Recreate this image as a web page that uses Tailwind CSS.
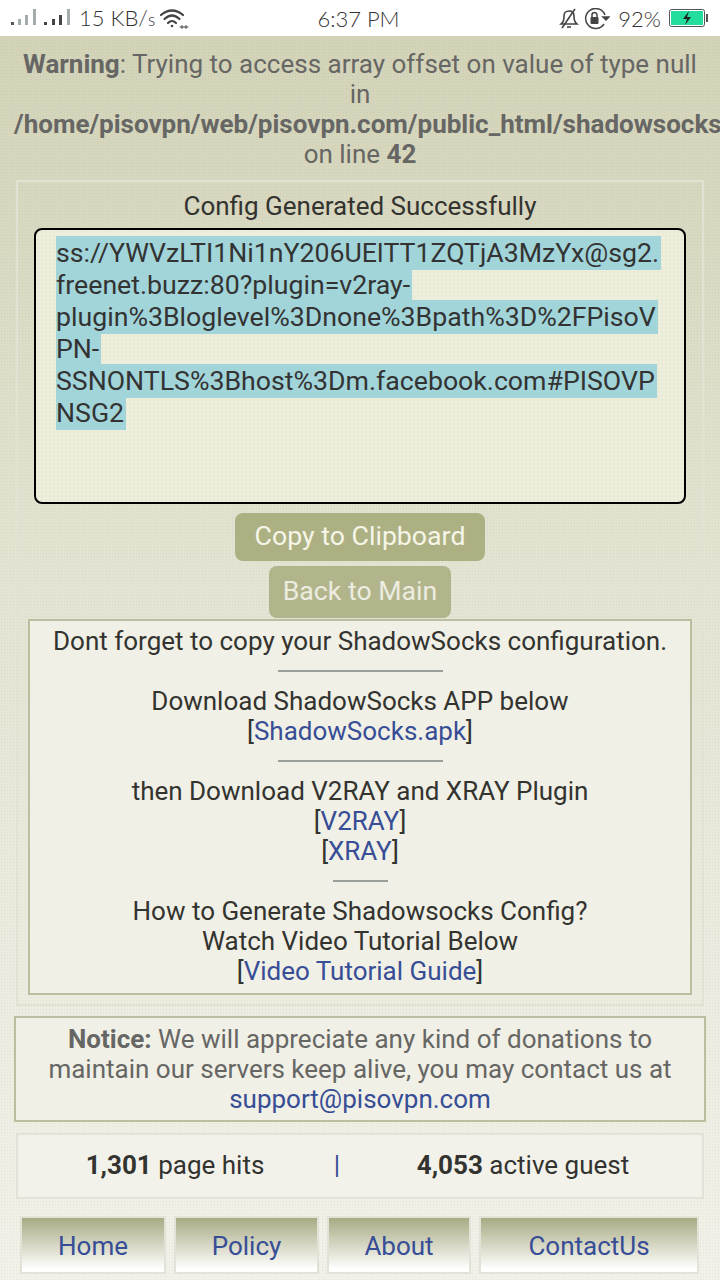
<!DOCTYPE html>
<html>
<head>
<meta charset="utf-8">
<script src="https://cdn.jsdelivr.net/npm/@tailwindcss/browser@4"></script>
</head>
<body class="w-[720px] h-[1280px] overflow-hidden bg-white font-['Roboto',sans-serif] text-[26px] leading-[30px] text-[#333330]">
<div class="h-9 bg-white flex items-center justify-between pl-[11px] pr-[11px] text-[#333] font-['Lato',sans-serif] font-light text-[22px] leading-[36px]">
  <div class="flex items-center w-[200px] pt-[1px]">
    <svg width="60" height="20" viewBox="0 0 60 20" class="mr-[8px] -mt-[3px]">
      <rect x="0" y="15" width="3" height="3" fill="#555"/><rect x="7" y="12" width="3" height="6" fill="#a4adad"/><rect x="14" y="8" width="3" height="10" fill="#a4adad"/><rect x="22" y="2" width="3" height="16" fill="#a4adad"/>
      <rect x="33" y="15" width="3" height="3" fill="#444"/><rect x="41" y="12" width="3" height="6" fill="#444"/><rect x="48" y="8" width="3" height="10" fill="#444"/><rect x="56" y="2" width="3" height="16" fill="#a4adad"/>
    </svg>
    <span class="whitespace-nowrap">15 KB/<span class="text-[17px]">s</span></span>
    <svg width="30" height="22" viewBox="0 0 30 22" class="ml-[4px]" fill="none" stroke="#444" stroke-linecap="round">
      <path d="M2 7 Q13 -2 24 7" stroke-width="2.2"/><path d="M5.5 11 Q13 4 20.5 11" stroke-width="2.2"/><path d="M9 15 Q13 11 17 15" stroke-width="2.2"/><circle cx="13" cy="18" r="1.3" fill="#444" stroke="none"/>
      <path d="M21 19h4M23 17.5v3M25.5 19h3.5M27 17.5v3" stroke-width="1"/>
    </svg>
  </div>
  <div class="whitespace-nowrap pt-[1px] pr-[3px]">6:37 PM</div>
  <div class="flex items-center justify-end w-[200px] whitespace-nowrap pt-[1px]">
    <svg width="20" height="21" viewBox="0 0 20 21" fill="none" stroke="#444" stroke-width="1.6">
      <path d="M2 16c2-2 3-3 3-8 0-3 2-5 5-5s5 2 5 5c0 5 1 6 3 8z"/><path d="M8 19h4"/><path d="M3 20 L16 1"/>
    </svg>
    <svg width="26" height="22" viewBox="0 0 26 22" fill="none" stroke="#444" stroke-width="1.5" class="ml-[5px]">
      <path d="M21 7A10 10 0 1 0 20 16"/><path d="M19 9h6l-3 3z" fill="#444"/><rect x="6.5" y="9" width="8" height="7" rx="1" fill="#444" stroke="none"/><path d="M8 9V7a2.5 2.5 0 0 1 5 0v2"/>
    </svg>
    <span class="ml-[8px]">92%</span>
    <svg width="40" height="20" viewBox="0 0 40 20" class="ml-[8px]">
      <rect x="0.5" y="0.5" width="35" height="17" rx="2" fill="#fff" stroke="#555"/><rect x="2" y="2" width="32" height="14" fill="#22dd9b"/><rect x="37" y="5" width="2" height="8" fill="#555"/>
      <path d="M20 2l-6 8h4l-2 6 6-8h-4z" fill="#222"/>
    </svg>
  </div>
</div>
<div class="h-[1244px] bg-[radial-gradient(circle,#7a7a5a18_0.7px,transparent_1px),linear-gradient(to_bottom,#d3d3b8,#e4e4d4_45%,#f1f1e9)] bg-[size:3px_3px,100%_100%] overflow-hidden">
  <div class="text-center text-[#666664] pt-[13px] h-[144px] overflow-hidden">
    <div><b class="font-bold">Warning</b>: Trying to access array offset on value of type null</div>
    <div>in</div>
    <div class="whitespace-nowrap font-bold text-left pl-[14px]">/home/pisovpn/web/pisovpn.com/public_html/shadowsocks</div>
    <div>on line <b>42</b></div>
  </div>
  <div class="mx-4 border-2 border-[#e2e2d2] h-[826px] flex flex-col items-center">
    <div class="pt-[9px] h-[46px] shrink-0">Config Generated Successfully</div>
    <div class="w-[652px] h-[276px] shrink-0 bg-[radial-gradient(circle,#9a9a7a18_0.7px,transparent_1px)] bg-[size:4px_4px] bg-[#eeeedc] border-2 border-black rounded-[8px] pl-[20px] pt-[7px] text-[#333] text-[26.7px] leading-[32px]">
      <span class="bg-[#a2d5d9] py-[1px] pr-[2px] box-decoration-clone">ss://YWVzLTI1Ni1nY206UElTT1ZQTjA3MzYx@sg2.<br>freenet.buzz:80?plugin=v2ray-<br>plugin%3Bloglevel%3Dnone%3Bpath%3D%2FPisoV<br>PN-<br>SSNONTLS%3Bhost%3Dm.facebook.com#PISOVP<br>NSG2</span>
    </div>
    <div class="mt-[9px] h-[48px] w-[250px] shrink-0 rounded-[8px] bg-[#adb082] text-[#f5f5e8] text-[26.7px] pb-[2px] flex items-center justify-center">Copy to Clipboard</div>
    <div class="mt-[5px] h-[52px] w-[182px] shrink-0 rounded-[8px] bg-[#b2b58b] text-[#ecece0] text-[26.7px] pb-[2px] flex items-center justify-center">Back to Main</div>
    <div class="mt-[1px] w-[664px] h-[376px] shrink-0 bg-[#f0f0e6] border-2 border-[#bcbea0] text-center pt-[5px]">
      <div>Dont forget to copy your ShadowSocks configuration.</div>
      <div class="mx-auto my-[14px] w-[165px] border-t-2 border-[#9a9f9a]"></div>
      <div>Download ShadowSocks APP below</div>
      <div>[<a class="text-[#374d96]">ShadowSocks.apk</a>]</div>
      <div class="mx-auto my-[14px] w-[165px] border-t-2 border-[#9a9f9a]"></div>
      <div>then Download V2RAY and XRAY Plugin</div>
      <div>[<a class="text-[#374d96]">V2RAY</a>]</div>
      <div>[<a class="text-[#374d96]">XRAY</a>]</div>
      <div class="mx-auto my-[14px] w-[55px] border-t-2 border-[#9a9f9a]"></div>
      <div>How to Generate Shadowsocks Config?</div>
      <div>Watch Video Tutorial Below</div>
      <div>[<a class="text-[#374d96]">Video Tutorial Guide</a>]</div>
    </div>
  </div>
  <div class="mx-[14px] mt-[10px] h-[106px] border-2 border-[#bcbea0] bg-[#f0f0e6] text-center text-[#666664] pt-[6px]">
    <b>Notice:</b> We will appreciate any kind of donations to<br>maintain our servers keep alive, you may contact us at<br><a class="text-[#374d96]">support@pisovpn.com</a>
  </div>
  <div class="mx-4 mt-[11px] h-[66px] border-2 border-[#e2e2d6] bg-[#f2f2ea] pb-[2px] flex items-center">
    <div class="w-[314px] text-center"><b>1,301</b> page hits</div>
    <div class="text-[#374d96] w-[10px] text-center">|</div>
    <div class="flex-1 text-center pl-[2px]"><b>4,053</b> active guest</div>
  </div>
  <div class="flex mt-[17px] ml-[20px] gap-[8px] text-[#374d96] text-center">
    <div class="w-[146px] h-[58px] pt-[1px] border-2 border-[#e2e2d6] bg-gradient-to-b from-[#a9ab84] to-white to-95% flex items-center justify-center">Home</div>
    <div class="w-[145px] h-[58px] pt-[1px] border-2 border-[#e2e2d6] bg-gradient-to-b from-[#a9ab84] to-white to-95% flex items-center justify-center">Policy</div>
    <div class="w-[144px] h-[58px] pt-[1px] border-2 border-[#e2e2d6] bg-gradient-to-b from-[#a9ab84] to-white to-95% flex items-center justify-center">About</div>
    <div class="w-[220px] h-[58px] pt-[1px] border-2 border-[#e2e2d6] bg-gradient-to-b from-[#a9ab84] to-white to-95% flex items-center justify-center">ContactUs</div>
  </div>
</div>
</body>
</html>
